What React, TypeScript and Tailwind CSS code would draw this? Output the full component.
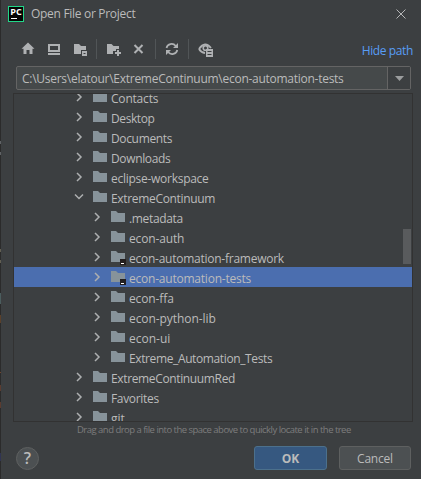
import React from 'react';

type Row = { name: string; child?: boolean; open?: boolean; project?: boolean; selected?: boolean; spacing: string };

const rows: Row[] = [
  { name: 'Contacts', spacing: 'tracking-[-0.2px]' },
  { name: 'Desktop', spacing: 'tracking-[-0.4px]' },
  { name: 'Documents', spacing: 'tracking-[-0.35px]' },
  { name: 'Downloads', spacing: 'tracking-[-0.35px]' },
  { name: 'eclipse-workspace', spacing: 'tracking-[-0.27px]' },
  { name: 'ExtremeContinuum', open: true, spacing: 'tracking-[-0.33px]' },
  { name: '.metadata', child: true, spacing: 'tracking-[-0.35px]' },
  { name: 'econ-auth', child: true, spacing: 'tracking-[-0.15px]' },
  { name: 'econ-automation-framework', child: true, project: true, spacing: 'tracking-[-0.25px]' },
  { name: 'econ-automation-tests', child: true, project: true, selected: true, spacing: 'tracking-[-0.22px]' },
  { name: 'econ-ffa', child: true, spacing: 'tracking-[-0.12px]' },
  { name: 'econ-python-lib', child: true, spacing: 'tracking-[-0.07px]' },
  { name: 'econ-ui', child: true, spacing: 'tracking-[0px]' },
  { name: 'Extreme_Automation_Tests', child: true, spacing: 'tracking-[-0.38px]' },
  { name: 'ExtremeContinuumRed', spacing: 'tracking-[-0.36px]' },
  { name: 'Favorites', spacing: 'tracking-[-0.33px]' },
  { name: 'git', spacing: 'tracking-[0px]' },
];

function Chevron({ open }: { open?: boolean }) {
  return (
    <svg className="h-5 w-4 shrink-0" viewBox="0 0 16 20" fill="none" stroke="#adafb0" strokeWidth="1.5">
      <path d={open ? 'M4 7.5l4 4 4-4' : 'M6 6l4 4-4 4'} />
    </svg>
  );
}

function Folder({ project }: { project?: boolean }) {
  return (
    <svg className="h-5 w-4 shrink-0" viewBox="0 0 16 20">
      <path d="M1 4h5l2 2h7v9H1z" fill="#87939a" />
      {project && (
        <>
          <path d="M10 12h6v6h-6z" fill="#231f20" />
          <path d="M11 16h3v1h-3z" fill="#fff" />
        </>
      )}
    </svg>
  );
}

function TreeRow({ row }: { row: Row }) {
  return (
    <div className={`flex h-5 shrink-0 items-center ${row.child ? 'pl-[75px]' : 'pl-[57px]'} ${row.selected ? 'bg-[#4b6eaf]' : ''}`}>
      <div className="flex w-[21px]">
        <Chevron open={row.open} />
      </div>
      <Folder project={row.project} />
      <span className={`ml-[3px] pt-1 leading-4 ${row.spacing}`}>{row.name}</span>
    </div>
  );
}

function Toolbar() {
  return (
    <svg className="h-5 w-[200px]" viewBox="18 39 200 20" fill="#afb1b3">
      <path d="M28 42.5l6.5 6.3h-2V54h-3v-4h-3v4h-3v-5.2h-2z" />
      <path fillRule="evenodd" d="M48 44h12v8H48zm2 2v4h8v-4zM48 53h12v2H48z" />
      <path d="M74 44h5l2 2h5v4h-5v4h-7zM82 51h5v5h-5z" />
      <path d="M83.5 53h2v1h-2z" fill="#3c3f41" />
      <path d="M96 39h1v20h-1zM155 39h1v20h-1zM188 39h1v20h-1z" fill="#515557" />
      <path d="M107 44h4.500l2 2h5.500v3h-3v2h-3v3h-6zM117 50h2v2h2v2h-2v2h-2v-2h-2v-2h2z" />
      <path d="M134.500 45l8 8M142.500 45l-8 8" fill="none" stroke="#afb1b3" strokeWidth="2" />
      <path d="M166.500 48a5.200 5.200 0 0 1 9.200-2M177.300 50a5.200 5.200 0 0 1-9.200 2" fill="none" stroke="#afb1b3" strokeWidth="1.7" />
      <path d="M178 43v5h-5zM166 55v-5h5z" />
      <path d="M199 49q6-8.500 12-1M199 49q2 3.500 6 4" fill="none" stroke="#afb1b3" strokeWidth="1.800" />
      <circle cx="205.500" cy="48" r="2.300" fill="none" stroke="#afb1b3" strokeWidth="1.600" />
      <path d="M206 49h7v8h-7z" />
      <path d="M207.500 51h4v1h-4zM207.500 54h4v1h-4z" fill="#3c3f41" />
    </svg>
  );
}

export default function App() {
  return (
    <div className="flex h-[479px] w-[421px] overflow-hidden whitespace-nowrap bg-[#3c3f41] font-['Open_Sans','Noto_Sans',sans-serif] text-[12px] text-[#bbbbbb]">
      <div className="flex w-px flex-col bg-[#2b2b2b]">
        <i className="mt-[141px] h-[3px] bg-[#606366]" />
        <i className="mt-2 h-[3px] bg-[#606366]" />
        <i className="mt-[94px] h-[3px] bg-[#625f52]" />
        <i className="mt-2 h-[3px] bg-[#625f52]" />
        <i className="mt-[30px] h-[11px] bg-[#4b5d5e]" />
        <i className="mt-[11px] h-2 bg-[#5b402a]" />
        <i className="mt-[49px] h-px bg-[#70452c]" />
        <i className="mt-3 h-[6px] bg-[#5b3c30]" />
        <i className="mt-[11px] h-[6px] bg-[#5b3c30]" />
        <i className="mt-[45px] h-2 bg-[#303452]" />
      </div>
      <div className="flex w-[420px] flex-col">
        <header className="flex h-[27px] items-center pl-[7px] pr-[15px]">
          <svg className="h-4 w-4" viewBox="0 0 16 16">
            <path d="M0 0h16v16H0z" fill="#21d789" />
            <path d="M1 1h14v14H1z" fill="#050505" />
            <text x="2.300" y="8.800" fill="#fff" fontSize="8.500" fontWeight="700" textLength="11.500" lengthAdjust="spacingAndGlyphs">PC</text>
            <path d="M3 12h6v1H3z" fill="#fff" />
          </svg>
          <h1 className="ml-[7px] tracking-[-0.3px]">Open File or Project</h1>
          <svg className="ml-auto h-[10px] w-[10px]" viewBox="0 0 10 10" fill="none" stroke="#b5b6b7">
            <path d="M.5.5l9 9M9.500.5l-9 9" />
          </svg>
        </header>
        <div className="flex h-[39px] items-center justify-between pl-[17px] pr-[8px] pt-[5px]">
          <Toolbar />
          <a className="pt-[3px] tracking-[-0.38px] text-[#589df6]">Hide path</a>
        </div>
        <div className="ml-[15px] flex h-6 w-[395px] rounded-[2px] border border-[#646464] bg-[#45494a]">
          <span className="flex-1 pl-[5px] leading-[23px] tracking-[-0.27px]">C:\Users\elatour\ExtremeContinuum\econ-automation-tests</span>
          <span className="flex w-[23px] items-center justify-center border-l border-[#646464] bg-[#3c3f41]">
            <svg className="h-[5px] w-[9px]" viewBox="0 0 9 5" fill="#9b9d9e"><path d="M0 0h9L4.500 5z" /></svg>
          </span>
        </div>
        <main className="relative ml-3 mt-[3px] flex h-[329px] w-[400px] flex-col overflow-hidden border border-[#323232]">
          <div className="-mt-[7px] flex flex-col">
            {rows.map((row) => <TreeRow key={row.name} row={row} />)}
          </div>
          <i className="absolute right-[1px] top-[135px] h-[35px] w-2 bg-[#595b5d]" />
        </main>
        <p className="pl-[76px] text-[9.5px] leading-[15px] tracking-[-0.52px] text-[#7d7d7d]">Drag and drop a file into the space above to quickly locate it in the tree</p>
        <footer className="mt-[9px] flex h-6 items-center pl-[15px]">
          <button className="h-[23px] w-[23px] rounded-full border border-[#5e6060] bg-[#4c5052] text-[16px] font-semibold leading-[20px]">?</button>
          <button className="ml-[215px] h-6 w-[73px] rounded-[3px] border border-[#4c708c] bg-[#365880] pt-[2px] font-bold">OK</button>
          <button className="ml-3 h-6 w-[72px] rounded-[3px] border border-[#5e6060] bg-[#4c5052] pt-[2px] tracking-[-0.2px]">Cancel</button>
        </footer>
      </div>
    </div>
  );
}
